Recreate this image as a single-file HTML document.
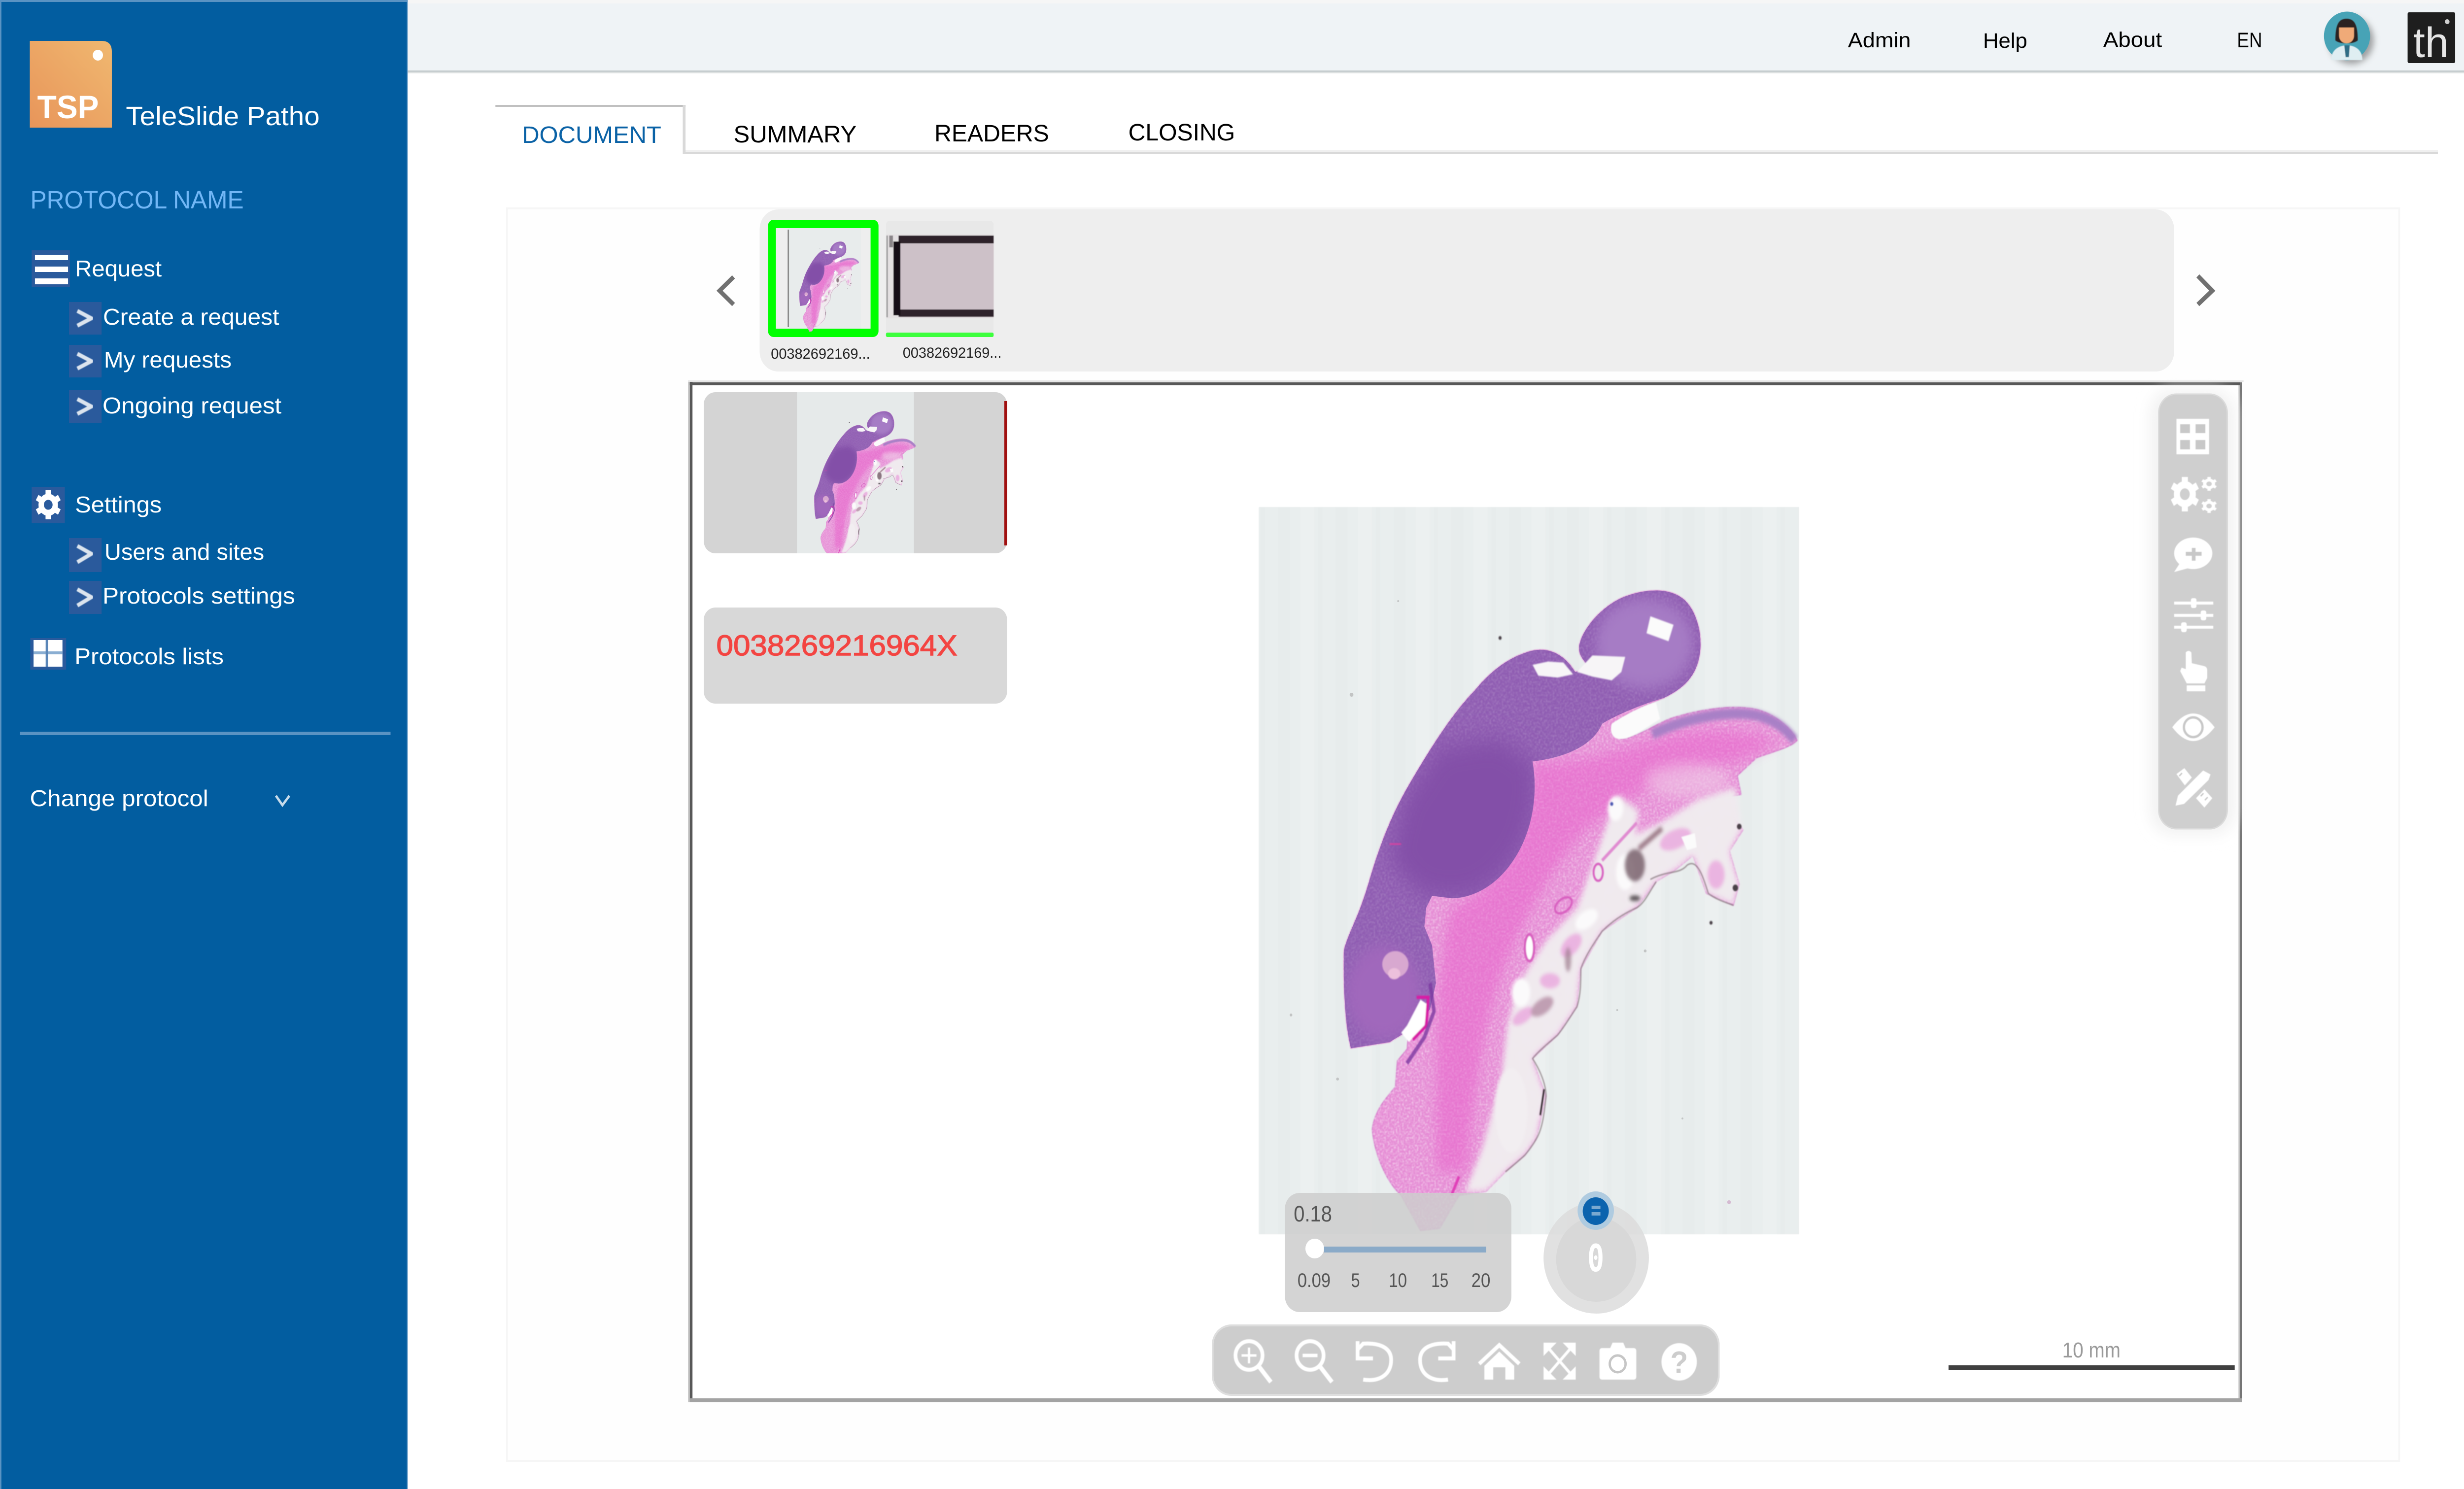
<!DOCTYPE html>
<html lang="en">
<head>
<meta charset="utf-8">
<title>TeleSlide Patho</title>
<style>
html,body{margin:0;padding:0;background:#fff;width:100%;height:100%;overflow:hidden}
svg{display:block;width:100%;height:100%}
text{font-family:"Liberation Sans",sans-serif}
</style>
</head>
<body>
<svg xmlns="http://www.w3.org/2000/svg" viewBox="0 0 5287 3022" preserveAspectRatio="none">
<defs>
  <linearGradient id="logoG" x1="1" y1="0" x2="0" y2="1">
    <stop offset="0" stop-color="#f0b870"/><stop offset="1" stop-color="#e8955a"/>
  </linearGradient>
  <pattern id="stripes" width="124" height="40" patternUnits="userSpaceOnUse">
    <rect width="124" height="40" fill="#e9eeee"/>
    <rect x="14" width="26" height="40" fill="#e7ecec"/>
    <rect x="62" width="30" height="40" fill="#ecf0f0"/>
    <rect x="100" width="10" height="40" fill="#e7ecec"/>
  </pattern>
  <filter id="tx" x="-5%" y="-5%" width="110%" height="110%" color-interpolation-filters="sRGB">
    <feTurbulence type="fractalNoise" baseFrequency="0.24" numOctaves="2" seed="4" result="n"/>
    <feColorMatrix in="n" type="matrix" values="0 0 0 0 1  0 0 0 0 1  0 0 0 0 1  1.5 0 0 0 -0.62" result="w"/>
    <feComposite in="w" in2="SourceAlpha" operator="in" result="wi"/>
    <feMerge result="m"><feMergeNode in="SourceGraphic"/><feMergeNode in="wi"/></feMerge>
    <feGaussianBlur in="m" stdDeviation="1.2"/>
  </filter>
  <filter id="txp" x="-5%" y="-5%" width="110%" height="110%" color-interpolation-filters="sRGB">
    <feTurbulence type="fractalNoise" baseFrequency="0.22" numOctaves="2" seed="9" result="n"/>
    <feColorMatrix in="n" type="matrix" values="0 0 0 0 1  0 0 0 0 1  0 0 0 0 1  0.5 0 0 0 -0.2" result="w"/>
    <feComposite in="w" in2="SourceAlpha" operator="in" result="wi"/>
    <feMerge result="m"><feMergeNode in="SourceGraphic"/><feMergeNode in="wi"/></feMerge>
    <feGaussianBlur in="m" stdDeviation="1.2"/>
  </filter>
  <filter id="b1" x="-20%" y="-20%" width="140%" height="140%"><feGaussianBlur stdDeviation="1.4"/></filter>
  <filter id="b3" x="-30%" y="-30%" width="160%" height="160%"><feGaussianBlur stdDeviation="4"/></filter>
  <filter id="b6" x="-10%" y="-10%" width="120%" height="120%"><feGaussianBlur stdDeviation="7"/></filter>
  <filter id="b12" x="-40%" y="-40%" width="180%" height="180%"><feGaussianBlur stdDeviation="14"/></filter>
  <filter id="b25" x="-40%" y="-40%" width="180%" height="180%"><feGaussianBlur stdDeviation="26"/></filter>
  <filter id="soft" x="-10%" y="-10%" width="120%" height="120%"><feGaussianBlur stdDeviation="0.9"/></filter>
  <filter id="sh" x="-40%" y="-40%" width="180%" height="180%"><feGaussianBlur stdDeviation="7"/></filter>

  <path id="gearT" d="M0 -.7L0 -1M.606 -.35L.866 -.5M.606 .35L.866 .5M0 .7L0 1M-.606 .35L-.866 .5M-.606 -.35L-.866 -.5" fill="none" stroke="#fff" stroke-width=".42"/>
  <g id="gear"><circle r=".55" fill="none" stroke="#fff" stroke-width=".42"/><use href="#gearT"/></g>

  <clipPath id="cpPurple"><path d="M892 320C905 280 960 235 1010 220C1060 205 1120 200 1160 225C1195 250 1210 300 1203 340C1195 390 1160 415 1110 435C1050 450 990 470 950 490C930 530 870 560 770 570C785 640 770 720 720 780C680 830 620 860 560 860L510 855L495 880L490 920L510 960L520 1040L505 1095L470 1130L450 1140L400 1165L300 1178C285 1130 280 1050 282 970C295 930 320 900 345 830C370 760 400 690 450 620C500 550 560 470 620 420C670 370 720 345 770 335C810 328 850 340 880 380L920 375C905 355 885 345 892 320Z"/></clipPath>

  <g id="tissue">
    <path filter="url(#tx)" fill="#e58ad4" stroke="#cf6cc4" stroke-width="2" stroke-linejoin="round" d="M892 320C905 280 960 235 1010 220C1060 205 1120 200 1160 225C1195 250 1210 300 1203 340C1195 390 1160 415 1110 435C1060 450 1010 470 975 490C970 510 980 525 1010 522C1060 510 1090 490 1130 478C1200 460 1280 450 1340 458C1390 465 1435 495 1455 525C1440 540 1390 550 1350 562L1300 600L1310 640L1240 650L1300 700L1315 715L1280 760L1305 830L1290 875L1220 850L1185 770L1140 800L1090 825L1040 880L950 930L895 1010L885 1090L835 1150L770 1200L805 1280L780 1370L750 1405L700 1440L650 1482L580 1490L530 1560L480 1565L430 1490C390 1460 360 1400 355 1350C360 1310 395 1280 415 1260L420 1205L445 1180L450 1140L400 1165L300 1178C285 1130 280 1050 282 970C295 930 320 900 345 830C370 760 400 690 450 620C500 550 560 470 620 420C670 370 720 345 770 335C810 328 850 340 880 380L920 375C905 355 885 345 892 320Z"/>
    <path filter="url(#b12)" fill="#e860cb" opacity=".5" d="M770 570C900 580 1000 540 1150 510C1250 500 1330 500 1400 530L1300 570C1150 590 1000 640 900 720C820 800 760 880 700 1000C650 1100 620 1250 600 1440L520 1440C520 1200 520 1000 560 880C680 850 780 700 770 570Z"/>
    <ellipse cx="1170" cy="610" rx="110" ry="36" fill="#f0c8e6" opacity=".6" filter="url(#b12)"/>
    <g filter="url(#b6)"><path filter="url(#tx)" fill="#eee6ec" d="M925 790L990 640L1045 675L1035 725L1100 700L1200 650L1295 625L1312 715L1280 760L1305 830L1290 875L1220 850L1185 770L1140 800L1090 825L1040 880L950 930L895 1010L885 1090L835 1150L770 1200L805 1280L780 1370L750 1405L700 1440L650 1482L595 1484L640 1390L690 1240L705 1130L735 1040L805 950L885 880Z"/></g>
    <g filter="url(#b3)" fill="#e9a2dc" opacity=".75">
      <ellipse cx="870" cy="960" rx="32" ry="18" transform="rotate(-40 870 960)"/>
      <ellipse cx="815" cy="1035" rx="26" ry="16"/>
      <ellipse cx="745" cy="1110" rx="30" ry="14" transform="rotate(-30 745 1110)"/>
      <ellipse cx="1140" cy="735" rx="42" ry="20" transform="rotate(-20 1140 735)"/>
      <ellipse cx="1245" cy="810" rx="22" ry="30"/>
    </g>
    <g filter="url(#b3)" fill="#fbfafb">
      <ellipse cx="1010" cy="805" rx="24" ry="38"/>
      <ellipse cx="985" cy="670" rx="20" ry="26"/>
      <ellipse cx="910" cy="905" rx="32" ry="18" transform="rotate(-30 910 905)"/>
      <ellipse cx="740" cy="1060" rx="24" ry="30"/>
      <ellipse cx="715" cy="1310" rx="42" ry="90" fill="#f2eef1"/>
    </g>
    <g clip-path="url(#cpPurple)">
      <rect x="260" y="190" width="980" height="1010" fill="#8f5cb2" filter="url(#txp)"/>
      <ellipse cx="1060" cy="320" rx="125" ry="95" fill="#a67cc5" filter="url(#b12)"/>
      <path d="M530 540L680 520L770 570C785 640 770 720 720 780C680 830 620 860 560 860L480 850L400 780L440 650Z" fill="#8350a8" filter="url(#b25)"/>
      <ellipse cx="385" cy="1060" rx="95" ry="100" fill="#a068bc" filter="url(#b12)"/>
    </g>
    <path d="M1080 512C1180 472 1290 462 1350 472C1400 482 1430 505 1448 525" fill="none" stroke="#a880c6" stroke-width="22" filter="url(#b3)"/>
    <g filter="url(#b1)">
      <path fill="#f7f5f7" d="M770 365L810 358L850 360L875 385L835 392L785 388Z"/>
      <path fill="#f7f5f7" d="M885 380L925 345L1010 348L1000 380L975 398L925 390Z"/>
      <path fill="#fbfbfb" d="M1075 262L1135 280L1122 315L1065 298Z"/>
      <path fill="#fbfbfb" d="M975 490C1010 470 1060 450 1090 445L1100 480C1060 500 1030 520 1000 522C980 525 968 510 975 490Z"/>
      <path fill="#fbfbfb" d="M1155 730L1190 722L1195 752L1170 758Z"/>
      <path fill="#fff" d="M445 1130L480 1075L498 1085L490 1130L450 1165L430 1145Z"/>
      <ellipse cx="415" cy="1000" rx="34" ry="28" fill="#d8a8d0"/>
      <ellipse cx="412" cy="1020" rx="16" ry="12" fill="#ecc0dc"/>
      <path d="M470 1070L500 1070L495 1130L460 1160" fill="none" stroke="#d81fa5" stroke-width="7"/>
      <path d="M505 1040L515 1100L490 1155L445 1210" fill="none" stroke="#7a3aa0" stroke-width="9" opacity=".8"/>
      <ellipse cx="850" cy="875" rx="24" ry="14" transform="rotate(-30 850 875)" fill="none" stroke="#d860c0" stroke-width="5"/>
      <ellipse cx="762" cy="965" rx="12" ry="28" fill="#fff" stroke="#d860c0" stroke-width="6"/>
      <ellipse cx="940" cy="805" rx="12" ry="18" fill="none" stroke="#d860c0" stroke-width="5"/>
      <path d="M950 780L1040 700" stroke="#e08ad0" stroke-width="7" fill="none"/>
      <path d="M580 1450L560 1490" stroke="#e040b8" stroke-width="7" fill="none"/>
      <path d="M400 745L430 745" stroke="#e040a0" stroke-width="3" fill="none"/>
    </g>
    <g filter="url(#b3)">
      <ellipse cx="1035" cy="790" rx="26" ry="34" fill="#6a505c" opacity=".75"/>
      <path d="M1045 755L1105 712" stroke="#9c7a88" stroke-width="11" fill="none"/>
      <ellipse cx="1035" cy="860" rx="14" ry="6" fill="#3a3036" opacity=".8"/>
      <ellipse cx="862" cy="990" rx="8" ry="26" fill="#9c7a8c" opacity=".7"/>
      <ellipse cx="795" cy="1090" rx="32" ry="16" fill="#b48ca4" opacity=".8" transform="rotate(-30 795 1090)"/>
    </g>
    <g filter="url(#b1)" fill="#4a4046">
      <path d="M800 1265L790 1320" stroke="#2c2428" stroke-width="4"/>
      <circle cx="1305" cy="708" r="6"/><circle cx="1295" cy="838" r="7"/><circle cx="1232" cy="912" r="4"/>
      <circle cx="686" cy="308" r="4"/><circle cx="975" cy="660" r="4" fill="#4a55b0"/>
      <path d="M1075 820C1120 800 1150 810 1170 790C1195 775 1210 810 1225 850C1250 865 1275 870 1290 875M1090 825C1070 850 1060 870 1040 880C1000 895 975 910 950 930C925 960 905 985 895 1010C895 1040 895 1065 885 1090C865 1115 850 1135 835 1150C815 1165 790 1180 770 1200C790 1225 805 1255 805 1280C800 1320 795 1350 780 1370C770 1385 760 1395 750 1405C730 1420 715 1430 700 1440" fill="none" stroke="#7a6a70" stroke-width="2.5" opacity=".8"/>
    </g>
  </g>
  <clipPath id="clipPrev"><rect x="1510" y="796" width="651" height="327" rx="25"/></clipPath>
  <clipPath id="clipSlide"><rect x="2701" y="1029" width="1159" height="1476"/></clipPath>
</defs>

<rect width="5287" height="3022" fill="#fff"/>

<!-- header -->
<rect x="875" y="0" width="4412" height="145" fill="#eff3f6"/>
<rect x="875" y="0" width="4412" height="7" fill="#f6f6f6"/>
<rect x="875" y="143" width="4412" height="4" fill="#c6cdcf"/>
<rect x="875" y="147" width="4412" height="2" fill="#e8eaea"/>
<text x="3965" y="96" font-size="43" fill="#000" textLength="135" lengthAdjust="spacingAndGlyphs">Admin</text>
<text x="4255" y="97" font-size="43" fill="#000" textLength="95" lengthAdjust="spacingAndGlyphs">Help</text>
<text x="4513" y="95" font-size="43" fill="#000" textLength="126" lengthAdjust="spacingAndGlyphs">About</text>
<text x="4800" y="96" font-size="43" fill="#000" textLength="54" lengthAdjust="spacingAndGlyphs">EN</text>

<!-- avatar -->
<circle cx="5045" cy="82" r="48" fill="#666" opacity=".6" filter="url(#sh)"/>
<circle cx="5036" cy="73" r="49.5" fill="#47a3b6"/>
<g filter="url(#soft)">
  <path d="M5002 122C5002 100 5020 92 5036 92C5052 92 5069 100 5069 122Z" fill="#dfeef2"/>
  <path d="M5030 92H5042L5040 116H5033Z" fill="#2f6d85"/>
  <path d="M5011 82C5011 50 5018 38 5035 38C5052 38 5059 50 5059 82C5050 90 5020 90 5011 82Z" fill="#2b2220"/>
  <path d="M5019 56H5051V72C5051 82 5043 88 5035 88C5027 88 5019 82 5019 72Z" fill="#f0aa78"/>
</g>

<!-- th logo -->
<rect x="5166" y="25" width="102" height="103" rx="3" fill="#1e1e1e"/>
<text x="5178" y="116" font-size="86" fill="#e6e6e6" textLength="76" lengthAdjust="spacingAndGlyphs">th</text>
<circle cx="5251" cy="44" r="5" fill="#cfcfcf"/>

<!-- sidebar -->
<rect x="0" y="0" width="875" height="3022" fill="#5a93c3"/>
<rect x="3" y="4" width="870" height="3018" fill="#025da0"/>
<path d="M64 83H218Q240 83 240 105V259H64Z" fill="url(#logoG)"/>
<circle cx="210" cy="112" r="11" fill="#fff"/>
<text x="80" y="240" font-size="66" font-weight="700" fill="#fff" textLength="132" lengthAdjust="spacingAndGlyphs">TSP</text>
<text x="270" y="254" font-size="54" fill="#fff" textLength="416" lengthAdjust="spacingAndGlyphs">TeleSlide Patho</text>
<text x="65" y="423" font-size="51" fill="#72b7f6" textLength="458" lengthAdjust="spacingAndGlyphs">PROTOCOL NAME</text>

<rect x="68" y="508" width="82" height="75" fill="#2a5a9c"/>
<g fill="#fff"><rect x="75" y="517" width="71" height="11"/><rect x="75" y="541" width="71" height="11"/><rect x="75" y="565" width="71" height="12"/></g>
<text x="161" y="561" font-size="46" fill="#fff" textLength="186" lengthAdjust="spacingAndGlyphs">Request</text>

<g fill="#2a5a9c">
  <rect x="148" y="613" width="70" height="66"/><rect x="148" y="700" width="70" height="66"/><rect x="148" y="792" width="70" height="66"/>
  <rect x="148" y="1092" width="70" height="69"/><rect x="148" y="1179" width="70" height="67"/>
  <rect x="68" y="988" width="71" height="74"/><rect x="65" y="1295" width="77" height="64"/>
</g>
<g fill="none" stroke="#dbe4ee" stroke-width="8" filter="url(#soft)">
  <path d="M166 631L196 646L166 661"/><path d="M166 718L196 733L166 748"/><path d="M166 810L196 825L166 840"/>
  <path d="M166 1108L196 1124L166 1141"/><path d="M166 1196L196 1212L166 1229"/>
</g>
<g fill="#fff" font-size="46">
  <text x="221" y="659" textLength="378" lengthAdjust="spacingAndGlyphs">Create a request</text>
  <text x="223" y="746" textLength="274" lengthAdjust="spacingAndGlyphs">My requests</text>
  <text x="220" y="839" textLength="384" lengthAdjust="spacingAndGlyphs">Ongoing request</text>
  <text x="161" y="1040" textLength="186" lengthAdjust="spacingAndGlyphs">Settings</text>
  <text x="224" y="1136" textLength="343" lengthAdjust="spacingAndGlyphs">Users and sites</text>
  <text x="220" y="1225" textLength="413" lengthAdjust="spacingAndGlyphs">Protocols settings</text>
  <text x="160" y="1348" textLength="320" lengthAdjust="spacingAndGlyphs">Protocols lists</text>
  <text x="64" y="1636" textLength="383" lengthAdjust="spacingAndGlyphs">Change protocol</text>
</g>
<use href="#gear" transform="translate(103.5 1024.5) scale(27.5 29.5)"/>
<rect x="72" y="1299" width="62" height="54" fill="#fff"/>
<rect x="72" y="1322" width="62" height="6" fill="#8aaed2"/>
<rect x="98" y="1299" width="5" height="54" fill="#5a86b8"/>
<rect x="43" y="1485" width="795" height="7" fill="#5a93c3"/>
<path d="M592 1615L606 1634L621 1615" fill="none" stroke="#c7dbea" stroke-width="5"/>

<!-- tabs -->
<rect x="1470" y="304" width="3761" height="4" fill="#f0f0f0"/>
<rect x="1470" y="308" width="3761" height="5" fill="#d9d9d9"/>
<rect x="1063" y="213" width="408" height="4" fill="#c0c0c0"/>
<rect x="1465" y="213" width="6" height="100" fill="#d9d9d9"/>
<text x="1120" y="290" font-size="48" fill="#0a62a6" textLength="299" lengthAdjust="spacingAndGlyphs">DOCUMENT</text>
<text x="1574" y="289" font-size="48" fill="#000" textLength="264" lengthAdjust="spacingAndGlyphs">SUMMARY</text>
<text x="2005" y="287" font-size="48" fill="#000" textLength="246" lengthAdjust="spacingAndGlyphs">READERS</text>
<text x="2421" y="285" font-size="48" fill="#000" textLength="229" lengthAdjust="spacingAndGlyphs">CLOSING</text>

<!-- panel -->
<rect x="1088" y="423" width="4060" height="2542" fill="#fefefe" stroke="#f6f6f6" stroke-width="4"/>

<!-- thumb strip -->
<rect x="1630" y="425" width="3035" height="329" rx="40" fill="#eeeeee"/>
<path d="M1574 562L1544 590L1574 618" fill="none" stroke="#717171" stroke-width="9"/>
<path d="M4716 560L4747 590L4716 618" fill="none" stroke="#717171" stroke-width="9"/>

<rect x="1648" y="446" width="237" height="238" rx="12" fill="#00ff00"/>
<rect x="1665" y="463" width="203" height="204" fill="#eeeeee"/>
<rect x="1692" y="463" width="155" height="204" fill="#e8ecec"/>
<rect x="1690" y="466" width="3" height="198" fill="#8a8a8a"/>
<use href="#tissue" transform="translate(1684.5 462.4) scale(.109 .1346)"/>

<rect x="1901" y="448" width="231" height="236" rx="8" fill="#e8e8e8"/>
<rect x="1901" y="675" width="231" height="9" rx="3" fill="#3dff3d"/>
<g filter="url(#soft)">
  <rect x="1902" y="476" width="230" height="170" fill="#e4e0e2"/>
  <rect x="1902" y="478" width="3" height="166" fill="#9a9a9a"/>
  <rect x="1908" y="478" width="8" height="24" fill="#8a8488"/>
  <rect x="1930" y="480" width="202" height="164" fill="#cdc1c8"/>
  <rect x="1928" y="478" width="204" height="16" fill="#2f232b"/>
  <rect x="1928" y="628" width="204" height="15" fill="#2f232b"/>
  <rect x="1917" y="490" width="15" height="150" fill="#141012"/>
</g>
<text x="1654" y="728" font-size="30" fill="#222" textLength="213" lengthAdjust="spacingAndGlyphs">00382692169...</text>
<text x="1937" y="726" font-size="30" fill="#222" textLength="212" lengthAdjust="spacingAndGlyphs">00382692169...</text>

<!-- viewer frame -->
<rect x="1476" y="772" width="3338" height="3" fill="#e6e6e6"/>
<rect x="1480" y="775" width="6" height="2071" fill="#585858"/>
<rect x="1476" y="775" width="4" height="2071" fill="#c8c8c8"/>
<rect x="1480" y="776" width="3331" height="6" fill="#585858"/>
<rect x="4806" y="776" width="5" height="2070" fill="#757575"/>
<rect x="4803" y="782" width="3" height="2060" fill="#c0c0c0"/>
<rect x="1480" y="2838" width="3331" height="8" fill="#a3a3a3"/>
<rect x="1486" y="782" width="3317" height="2056" fill="#fff"/>

<!-- preview -->
<rect x="1510" y="796" width="651" height="327" rx="25" fill="#d4d4d4"/>
<g clip-path="url(#clipPrev)">
  <rect x="1710" y="796" width="251" height="327" fill="#e6eaea"/>
  <use href="#tissue" transform="translate(1695 788) scale(.1855 .225)"/>
</g>
<rect x="2155" y="814" width="6" height="293" fill="#a01010"/>

<rect x="1510" y="1233" width="651" height="195" rx="25" fill="#d8d8d8"/>
<text x="1537" y="1330" font-size="58" fill="#f34542" stroke="#f34542" stroke-width="1.4" textLength="517" lengthAdjust="spacingAndGlyphs">0038269216964X</text>

<!-- main slide -->
<rect x="2701" y="1029" width="1159" height="1476" fill="url(#stripes)" filter="url(#soft)"/>
<g clip-path="url(#clipSlide)">
  <use href="#tissue" transform="translate(2650 1000) scale(.829 .957)"/>
  <g fill="#a8a8a8" opacity=".6">
    <circle cx="2900" cy="1410" r="4"/><circle cx="2870" cy="2190" r="3"/><circle cx="3530" cy="1930" r="3"/>
    <circle cx="2770" cy="2060" r="3"/><circle cx="3470" cy="2050" r="2"/><circle cx="3610" cy="2270" r="2"/>
    <circle cx="3710" cy="2440" r="4" fill="#c89ac0"/><circle cx="3000" cy="1220" r="2"/>
  </g>
</g>

<!-- slider box -->
<rect x="2757" y="2421" width="486" height="242" rx="32" fill="#cdcdcd" fill-opacity=".86"/>
<text x="2776" y="2479" font-size="45" fill="#555" textLength="82" lengthAdjust="spacingAndGlyphs">0.18</text>
<rect x="2841" y="2530" width="348" height="12" fill="#8aaac8"/>
<circle cx="2821" cy="2534" r="20" fill="#fff"/>
<g font-size="40" fill="#555">
  <text x="2784" y="2612" textLength="71" lengthAdjust="spacingAndGlyphs">0.09</text>
  <text x="2899" y="2612" textLength="19" lengthAdjust="spacingAndGlyphs">5</text>
  <text x="2980" y="2612" textLength="39" lengthAdjust="spacingAndGlyphs">10</text>
  <text x="3071" y="2612" textLength="37" lengthAdjust="spacingAndGlyphs">15</text>
  <text x="3157" y="2612" textLength="41" lengthAdjust="spacingAndGlyphs">20</text>
</g>

<!-- rotation -->
<circle cx="3425" cy="2553" r="113" fill="#dcdcdc" fill-opacity=".85"/>
<circle cx="3425" cy="2556" r="86" fill="#d8d8d8"/>
<text x="3406" y="2580" font-size="76" font-weight="700" fill="#fff" style="font-family:'DejaVu Sans Mono',monospace" textLength="36" lengthAdjust="spacingAndGlyphs">0</text>
<circle cx="3424" cy="2457" r="39" fill="#afcbe0"/>
<circle cx="3424" cy="2458" r="28" fill="#0b63ae"/>
<rect x="3415" y="2447" width="19" height="7" fill="#7ba9d0"/>
<rect x="3415" y="2460" width="19" height="7" fill="#7ba9d0"/>

<!-- bottom toolbar -->
<rect x="2602" y="2690" width="1086" height="141" rx="40" fill="#cdcdcd" stroke="#dedede" stroke-width="4"/>
<g fill="none" stroke="#fff" stroke-width="8" filter="url(#soft)">
  <circle cx="2680" cy="2751" r="29"/><path d="M2701 2773L2727 2805" stroke-width="9"/>
  <path d="M2664 2751H2696M2680 2735V2767" stroke-width="5"/>
  <circle cx="2811" cy="2751" r="29"/><path d="M2832 2773L2858 2805" stroke-width="9"/>
  <path d="M2795 2751H2827" stroke-width="7"/>
  <path d="M2925 2800C2960 2805 2985 2790 2985 2760C2985 2735 2960 2725 2925 2727L2914 2738"/>
  <path d="M2913 2722V2757H2946"/>
  <path d="M3107 2800C3072 2805 3047 2790 3047 2760C3047 2735 3072 2725 3107 2727L3118 2738"/>
  <path d="M3119 2722V2757H3086"/>
  <path d="M3174 2768L3217 2730L3260 2768"/>
  <path d="M3316 2729L3377 2796M3377 2729L3316 2796" stroke-width="6"/>
</g>
<g fill="#fff" filter="url(#soft)">
  <path d="M3185 2772L3217 2743L3249 2772V2800H3230V2775H3204V2800H3185Z"/>
  <path d="M3312 2725H3340L3312 2752ZM3381 2725H3353L3381 2752ZM3312 2800H3340L3312 2773ZM3381 2800H3353L3381 2773Z"/>
  <path d="M3438 2736H3455L3460 2725H3483L3488 2736H3505Q3511 2736 3511 2742V2794Q3511 2800 3505 2800H3438Q3432 2800 3432 2794V2742Q3432 2736 3438 2736Z"/>
  <circle cx="3603" cy="2764" r="38"/>
</g>
<circle cx="3471" cy="2768" r="17" fill="none" stroke="#c6c6c6" stroke-width="5"/>
<text x="3603" y="2786" font-size="62" font-weight="700" fill="#cdcdcd" text-anchor="middle">?</text>

<!-- right toolbar -->
<rect x="4612" y="790" width="186" height="905" rx="50" fill="#f3f3f3" filter="url(#b12)"/>
<rect x="4632" y="800" width="147" height="882" rx="38" fill="#cfcfcf" stroke="#dadada" stroke-width="3"/>
<g filter="url(#soft)">
  <rect x="4670" y="850" width="70" height="72" fill="#fff"/>
  <g fill="#c8c8c8"><rect x="4678" y="861" width="21" height="18"/><rect x="4711" y="861" width="21" height="18"/><rect x="4678" y="893" width="21" height="19"/><rect x="4711" y="893" width="21" height="19"/></g>
  <use href="#gear" transform="translate(4688 1003) scale(31 35)"/>
  <use href="#gear" transform="translate(4740 982) scale(17 14)"/>
  <use href="#gear" transform="translate(4740 1027) scale(17 14)"/>
  <ellipse cx="4706" cy="1123" rx="41" ry="32" fill="#fff"/>
  <path d="M4678 1142L4665 1161L4700 1152Z" fill="#fff"/>
  <path d="M4690 1124H4724M4707 1112V1138" stroke="#c8c8c8" stroke-width="8" fill="none"/>
  <path d="M4665 1224H4749M4665 1249H4749M4665 1273H4749" stroke="#fff" stroke-width="6" fill="none"/>
  <g fill="#fff"><rect x="4701" y="1214" width="12" height="20" rx="4"/><rect x="4722" y="1239" width="12" height="20" rx="4"/><rect x="4680" y="1263" width="12" height="20" rx="4"/></g>
  <path d="M4690 1324Q4696 1318 4702 1324L4703 1346L4730 1352Q4736 1354 4736 1360V1376L4730 1387H4692L4678 1362L4681 1355L4690 1358Z" fill="#fff"/>
  <rect x="4692" y="1391" width="40" height="12" fill="#fff"/>
  <path d="M4661 1476Q4706 1420 4752 1476Q4706 1532 4661 1476Z" fill="#fff"/>
  <circle cx="4706" cy="1476" r="20" fill="none" stroke="#c8c8c8" stroke-width="5"/>
  <path d="M4670 1571L4687 1559L4703 1578L4688 1594Z" fill="#fff"/>
  <path d="M4712 1620L4730 1602L4747 1620L4730 1639Z" fill="#fff"/>
  <path d="M4676 1575L4682 1569M4722 1616L4728 1610M4731 1624L4737 1618" stroke="#c8c8c8" stroke-width="3" fill="none"/>
  <path d="M4666 1637L4672 1614L4727 1562L4745 1571L4740 1584L4687 1633Z" fill="#fff" stroke="#cfcfcf" stroke-width="3"/>
</g>

<!-- scale -->
<text x="4425" y="2755" font-size="44" fill="#9a9a9a" textLength="125" lengthAdjust="spacingAndGlyphs">10 mm</text>
<rect x="4181" y="2771" width="614" height="9" fill="#404040"/>
</svg>
</body>
</html>
